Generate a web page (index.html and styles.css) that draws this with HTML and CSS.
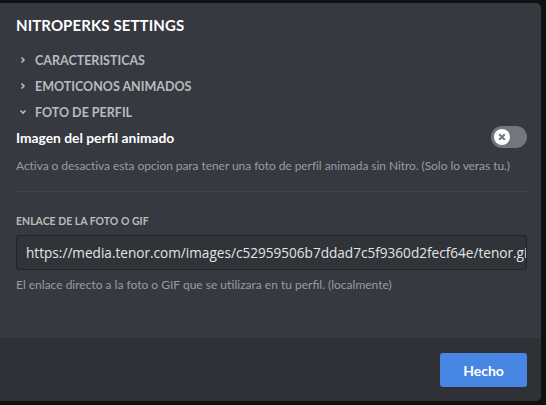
FILE: index.html
```
<!DOCTYPE html>
<html lang="es">
<head>
<meta charset="utf-8">
<link rel="stylesheet" href="styles.css">
</head>
<body>
<div class="modal">
  <div class="content">
    <h2 class="title">NITROPERKS SETTINGS</h2>
    <div class="section"><svg class="chev" viewBox="0 0 8 8"><path d="M2.5 1.5 L5 4 L2.5 6.5"/></svg><span>CARACTERISTICAS</span></div>
    <div class="section"><svg class="chev" viewBox="0 0 8 8"><path d="M2.5 1.5 L5 4 L2.5 6.5"/></svg><span>EMOTICONOS ANIMADOS</span></div>
    <div class="section"><svg class="chev" viewBox="0 0 8 8"><path d="M1.5 2.5 L4 5 L6.5 2.5"/></svg><span>FOTO DE PERFIL</span></div>
    <div class="setting-row">
      <div class="setting-label">Imagen del perfil animado</div>
      <div class="switch"><div class="knob"><svg viewBox="0 0 16 16"><path d="M5.2 5.2 L10.8 10.8 M10.8 5.2 L5.2 10.8"/></svg></div></div>
    </div>
    <div class="note note-main">Activa o desactiva esta opcion para tener una foto de perfil animada sin Nitro. (Solo lo veras tu.)</div>
    <div class="divider"></div>
    <div class="field-title">ENLACE DE LA FOTO O GIF</div>
    <div class="input">https://media.tenor.com/images/c52959506b7ddad7c5f9360d2fecf64e/tenor.gif</div>
    <div class="note note-small">El enlace directo a la foto o GIF que se utilizara en tu perfil. (localmente)</div>
  </div>
  <div class="footer">
    <button class="btn">Hecho</button>
  </div>
</div>
</body>
</html>
```
FILE: styles.css
```
html, body {
  margin: 0;
  padding: 0;
  background: #0f1012;
  width: 546px;
  height: 405px;
  overflow: hidden;
  font-family: Lato, "Noto Sans", sans-serif;
}
.modal {
  margin: 3px 0 0 0;
  width: 541px;
  height: 398px;
  background: #36393f;
  border-radius: 0 5px 5px 0;
  display: flex;
  flex-direction: column;
  overflow: hidden;
}
.content {
  flex: 1;
  padding: 12px 14px 0 16px;
}
.title {
  margin: 0 0 12px 0;
  font-size: 15px;
  line-height: 20px;
  font-weight: 700;
  color: #ffffff;
  letter-spacing: 0.1px;
}
.section {
  display: flex;
  align-items: center;
  height: 26px;
  color: #b9bbbe;
  font-size: 12.5px;
  font-weight: 700;
}
.chev {
  width: 8px;
  height: 8px;
  margin: 0 8px 0 3px;
  fill: none;
  stroke: #b9bbbe;
  stroke-width: 1.6;
}
.setting-row {
  display: flex;
  align-items: center;
  justify-content: space-between;
  height: 24px;
}
.setting-label {
  color: #ffffff;
  font-size: 13.8px;
  font-weight: 700;
}
.switch {
  width: 36px;
  height: 22px;
  border-radius: 11px;
  background: #72767d;
  display: flex;
  align-items: center;
  padding-left: 3px;
  box-sizing: border-box;
}
.knob {
  width: 16px;
  height: 16px;
  border-radius: 50%;
  background: #ffffff;
  display: flex;
}
.knob svg {
  width: 16px;
  height: 16px;
  stroke: #72767d;
  stroke-width: 2;
  fill: none;
}
.note {
  margin-top: 9px;
  color: #999ca1;
  font-size: 12px;
  line-height: 16px;
  white-space: nowrap;
}
.note-main {
  letter-spacing: -0.06px;
}
.divider {
  height: 1px;
  background: #42454a;
  margin: 17px 0 22px 0;
}
.field-title {
  color: #b9bbbe;
  font-size: 10.5px;
  font-weight: 700;
  line-height: 14px;
  margin-bottom: 7px;
}
.input {
  height: 35px;
  box-sizing: border-box;
  border: 1px solid #222427;
  background: #303338;
  border-radius: 3px;
  color: #e3e4e5;
  font-family: "Open Sans", sans-serif;
  font-size: 13.6px;
  line-height: 33px;
  padding: 0 9px;
  white-space: nowrap;
  overflow: hidden;
}
.note-small {
  margin-top: 7px;
  font-size: 12px;
}
.footer {
  height: 63px;
  background: #2f3136;
  display: flex;
  justify-content: flex-end;
  align-items: flex-start;
  padding: 15px 14px 0 0;
  box-sizing: border-box;
}
.btn {
  width: 87px;
  height: 34px;
  border: none;
  border-radius: 3px;
  background: #4886e3;
  color: #ffffff;
  font-family: Lato, "Noto Sans", sans-serif;
  font-size: 14px;
  font-weight: 700;
}
```
